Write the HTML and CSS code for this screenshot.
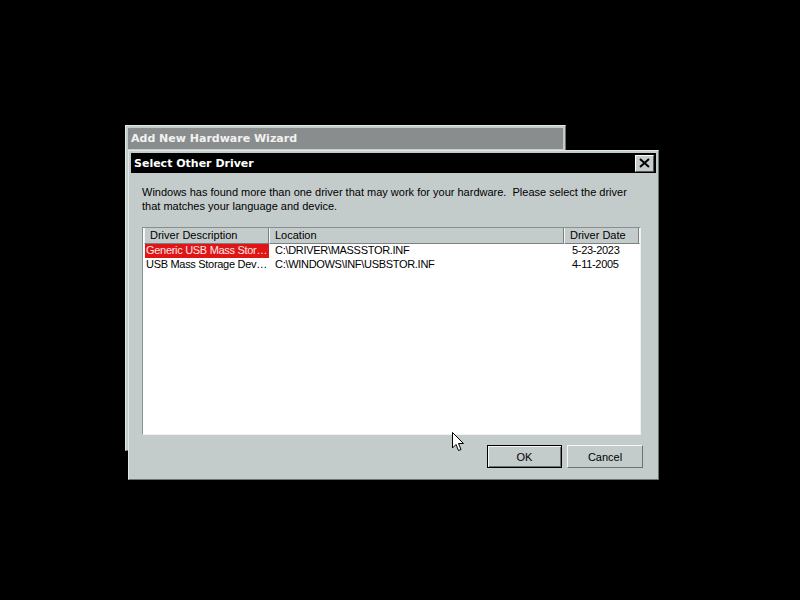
FILE: index.html
```html
<!DOCTYPE html>
<html lang="en">
<head>
    <meta charset="UTF-8">
    <title>Select Other Driver</title>
    <link rel="stylesheet" href="styles.css">
</head>
<body>
    <div class="desktop">
        <div class="window back-window">
            <div class="titlebar inactive">Add New Hardware Wizard</div>
        </div>

        <div class="window dialog">
            <div class="titlebar">
                <span>Select Other Driver</span>
                <button class="close-btn">
                    <svg width="11" height="10" viewBox="0 0 11 10">
                        <path d="M1 1 L10 9 M10 1 L1 9" stroke="#000" stroke-width="2"/>
                    </svg>
                </button>
            </div>

            <div class="content">
                <p class="intro">Windows has found more than one driver that may work for your hardware.&nbsp; Please select the driver<br>that matches your language and device.</p>

                <div class="listbox">
                    <div class="list-head">
                        <div class="col col-desc">Driver Description</div>
                        <div class="col col-loc">Location</div>
                        <div class="col col-date">Driver Date</div>
                        <div class="col col-rest"></div>
                    </div>
                    <div class="list-row">
                        <div class="cell col-desc selected">Generic USB Mass Stor…</div>
                        <div class="cell col-loc">C:\DRIVER\MASSSTOR.INF</div>
                        <div class="cell col-date">5-23-2023</div>
                    </div>
                    <div class="list-row">
                        <div class="cell col-desc">USB Mass Storage Dev…</div>
                        <div class="cell col-loc">C:\WINDOWS\INF\USBSTOR.INF</div>
                        <div class="cell col-date">4-11-2005</div>
                    </div>
                </div>

                <div class="buttons">
                    <button class="btn default">OK</button>
                    <button class="btn">Cancel</button>
                </div>
            </div>
        </div>

        <svg class="cursor" width="13" height="20" viewBox="0 0 13 20">
            <path d="M0.5 0.5 L0.5 16 L4 12.5 L6.5 18.5 L9 17.5 L6.5 11.5 L11.5 11.5 Z" fill="#fff" stroke="#000" stroke-width="1"/>
        </svg>
    </div>
</body>
</html>
```

FILE: styles.css
```css
body {
    margin: 0;
    background-color: #000;
}

.desktop {
    position: relative;
    width: 800px;
    height: 600px;
    background-color: #000;
    overflow: hidden;
}

.window {
    position: absolute;
    box-sizing: border-box;
    background-color: #c4cbcb;
    border: 1px solid #e2e6e6;
    border-right-color: #6e7272;
    border-bottom-color: #6e7272;
    padding: 2px;
}

.back-window {
    left: 125px;
    top: 125px;
    width: 441px;
    height: 326px;
}

.dialog {
    left: 128px;
    top: 150px;
    width: 531px;
    height: 330px;
    display: flex;
    flex-direction: column;
}

.titlebar {
    height: 21px;
    background-color: #000;
    color: #fff;
    font-family: "DejaVu Sans", Verdana, sans-serif;
    font-weight: bold;
    font-size: 11px;
    display: flex;
    align-items: center;
    justify-content: space-between;
    padding: 0 2px 0 3px;
}

.titlebar.inactive {
    background-color: #8a8d8d;
    color: #f2f2f2;
}

.close-btn {
    width: 19px;
    height: 17px;
    padding: 0;
    box-sizing: border-box;
    background-color: #c4cbcb;
    border: 1px solid #fff;
    border-right-color: #555;
    border-bottom-color: #555;
    display: flex;
    align-items: center;
    justify-content: center;
}

.content {
    flex: 1;
    display: flex;
    flex-direction: column;
    padding: 12px 15px 9px 11px;
    font-family: "Liberation Sans", Arial, sans-serif;
    font-size: 11px;
    color: #000;
}

.intro {
    margin: 0;
    line-height: 14px;
}

.listbox {
    margin-top: 14px;
    height: 208px;
    box-sizing: border-box;
    background-color: #fff;
    border: 1px solid #8a8e8e;
    border-right-color: #f0f2f2;
    border-bottom-color: #f0f2f2;
    padding: 0 0 0 1px;
}

.list-head {
    display: flex;
    height: 16px;
    background-color: #c4cbcb;
}

.col {
    box-sizing: border-box;
    border-right: 1px solid #7c8080;
    border-left: 1px solid #f4f6f6;
    padding-left: 5px;
    line-height: 15px;
    border-bottom: 1px solid #7c8080;
}

.col-desc {
    width: 125px;
    flex: none;
}

.col-loc {
    width: 295px;
    flex: none;
}

.col-date {
    width: 75px;
    flex: none;
}

.col-rest {
    flex: 1;
    padding: 0;
    border-right: none;
}

.list-row {
    display: flex;
    height: 14px;
    line-height: 13px;
    letter-spacing: -0.3px;
}

.cell {
    box-sizing: border-box;
    padding-left: 4px;
    white-space: nowrap;
    overflow: hidden;
}

.cell.col-desc {
    padding-left: 1px;
    margin-left: 1px;
    width: 124px;
}

.cell.col-loc {
    padding-left: 6px;
}

.cell.col-date {
    padding-left: 8px;
}

.selected {
    background-color: #e01515;
    color: #fde8e8;
}

.buttons {
    display: flex;
    justify-content: flex-end;
    gap: 5px;
    margin: 10px -2px 0 0;
}

.btn {
    width: 76px;
    height: 23px;
    box-sizing: border-box;
    font-family: "Liberation Sans", Arial, sans-serif;
    font-size: 11px;
    color: #000;
    background-color: #c4cbcb;
    border: 1px solid #f4f6f6;
    border-right-color: #6e7272;
    border-bottom-color: #6e7272;
    padding: 0;
}

.btn.default {
    margin-right: 0;
    width: 75px;
    border: 1px solid #000;
    box-shadow: inset 1px 1px 0 #f4f6f6, inset -1px -1px 0 #6e7272;
}

.cursor {
    position: absolute;
    left: 452px;
    top: 432px;
}
```
